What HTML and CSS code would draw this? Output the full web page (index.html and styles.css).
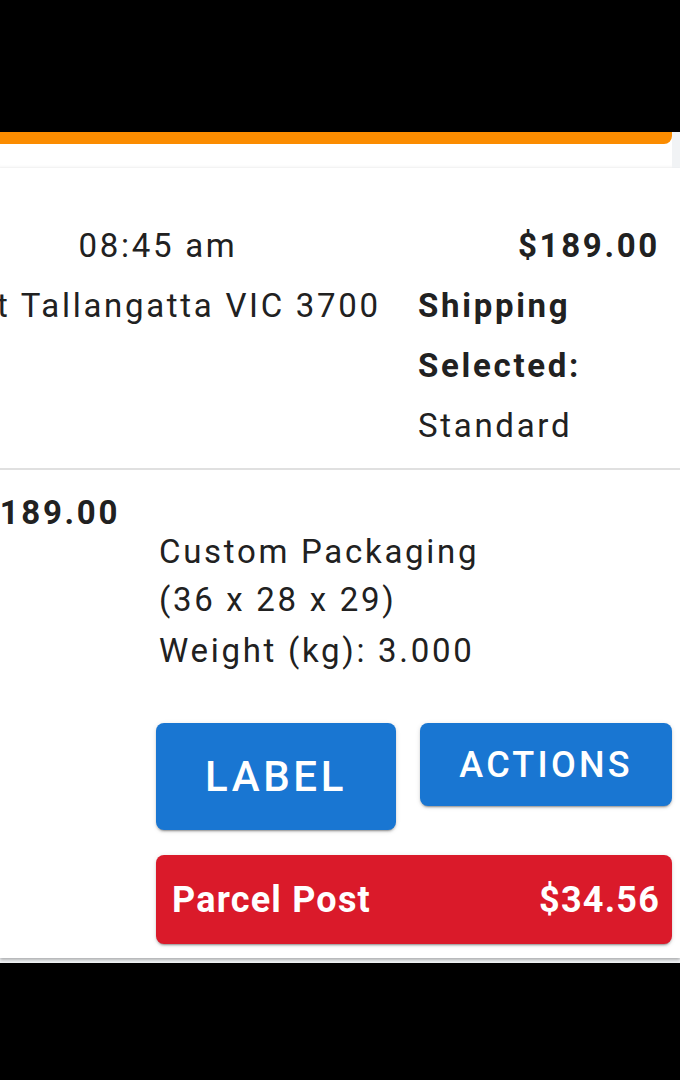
FILE: index.html
```html
<!DOCTYPE html>
<html lang="en">
<head>
<meta charset="utf-8">
<title>Order</title>
<link rel="stylesheet" href="styles.css">
</head>
<body>
<div class="status-bar"></div>
<main class="screen">
  <header class="topbar">
    <div class="topbar-accent"></div>
  </header>
  <section class="card">
    <div class="row row-summary">
      <div class="cell cell-when">
        <p class="line">08:45 am</p>
        <p class="line">East Tallangatta VIC 3700</p>
      </div>
      <div class="cell cell-ship">
        <p class="line price">$189.00</p>
        <p class="line strong">Shipping Selected:</p>
        <p class="line">Standard</p>
      </div>
    </div>
    <div class="row row-parcel">
      <div class="cell cell-total">
        <p class="line strong">$189.00</p>
      </div>
      <div class="cell cell-parcel">
        <div class="pack">
          <p class="pack-line">Custom Packaging (36 x 28 x 29)</p>
          <p class="pack-line weight">Weight (kg): 3.000</p>
        </div>
        <div class="buttons">
          <button class="btn btn-label">Label</button>
          <button class="btn btn-actions">Actions</button>
        </div>
        <div class="rate">
          <span>Parcel Post</span>
          <span>$34.56</span>
        </div>
      </div>
    </div>
  </section>
</main>
<div class="nav-bar"></div>
</body>
</html>
```
FILE: styles.css
```css
* { box-sizing: border-box; }
html, body { margin: 0; padding: 0; }
body {
  width: 680px;
  height: 1080px;
  overflow: hidden;
  background: #000;
  font-family: Roboto, "Liberation Sans", sans-serif;
  color: #212121;
  display: flex;
  flex-direction: column;
}
.status-bar { height: 132px; background: #000; flex: none; }
.nav-bar { flex: 1; background: #000; }
.screen {
  height: 831px;
  flex: none;
  background: #f1f3f5;
  display: flex;
  flex-direction: column;
  overflow: hidden;
}
.topbar {
  width: 672px;
  height: 36px;
  background: #fff;
  box-shadow: inset 0 -3px 3px -2px rgba(0,0,0,0.06);
  flex: none;
}
.topbar-accent {
  height: 12px;
  background: #fb8c00;
  border-bottom-right-radius: 8px;
}
.card {
  background: #fff;
  height: 790px;
  flex: none;
  box-shadow: 0 2px 3px rgba(0,0,0,0.28);
  position: relative;
  z-index: 1;
}
.line {
  margin: 0;
  font-size: 33px;
  line-height: 60px;
  letter-spacing: 2.7px;
  white-space: nowrap;
}
.strong, .price { font-weight: 700; }
.row { display: flex; }
.row-summary {
  padding: 48px 0 12px;
  border-bottom: 2px solid #e0e0e0;
}
.cell-when {
  width: 520px;
  margin-left: -102px;
  flex: none;
  text-align: center;
}
.cell-ship {
  flex: 1;
  padding-right: 20px;
}
.cell-ship .strong { white-space: normal; width: 200px; }
.price { text-align: right; }
.row-parcel { padding-top: 13px; }
.cell-total {
  width: 178px;
  margin-left: -22px;
  flex: none;
}
.cell-parcel {
  flex: 1;
  padding-right: 8px;
}
.pack { padding: 45px 0 0 3px; }
.pack-line {
  margin: 0;
  font-size: 33px;
  line-height: 48px;
  letter-spacing: 2.7px;
  width: 340px;
}
.weight { margin-top: 3px; }
.buttons {
  display: flex;
  align-items: flex-start;
  gap: 24px;
  margin-top: 48px;
}
.btn {
  border: 0;
  border-radius: 8px;
  background: #1976d2;
  color: #fff;
  font-family: Roboto, "Liberation Sans", sans-serif;
  font-weight: 500;
  text-transform: uppercase;
  box-shadow: 0 3px 1px -2px rgba(0,0,0,.2), 0 2px 2px 0 rgba(0,0,0,.14), 0 1px 5px 0 rgba(0,0,0,.12);
  padding: 0;
}
.btn-label {
  width: 240px;
  height: 107px;
  font-size: 42px;
  letter-spacing: 3.6px;
}
.btn-actions {
  width: 252px;
  height: 83px;
  font-size: 36px;
  letter-spacing: 3.2px;
}
.rate {
  margin-top: 25px;
  height: 89px;
  background: #da1a2a;
  color: #fff;
  border-radius: 8px;
  display: flex;
  align-items: center;
  justify-content: space-between;
  padding: 0 12px 0 16px;
  font-size: 36px;
  font-weight: 700;
  letter-spacing: 1.2px;
  box-shadow: 0 3px 1px -2px rgba(0,0,0,.2), 0 2px 2px 0 rgba(0,0,0,.14), 0 1px 5px 0 rgba(0,0,0,.12);
}
```
